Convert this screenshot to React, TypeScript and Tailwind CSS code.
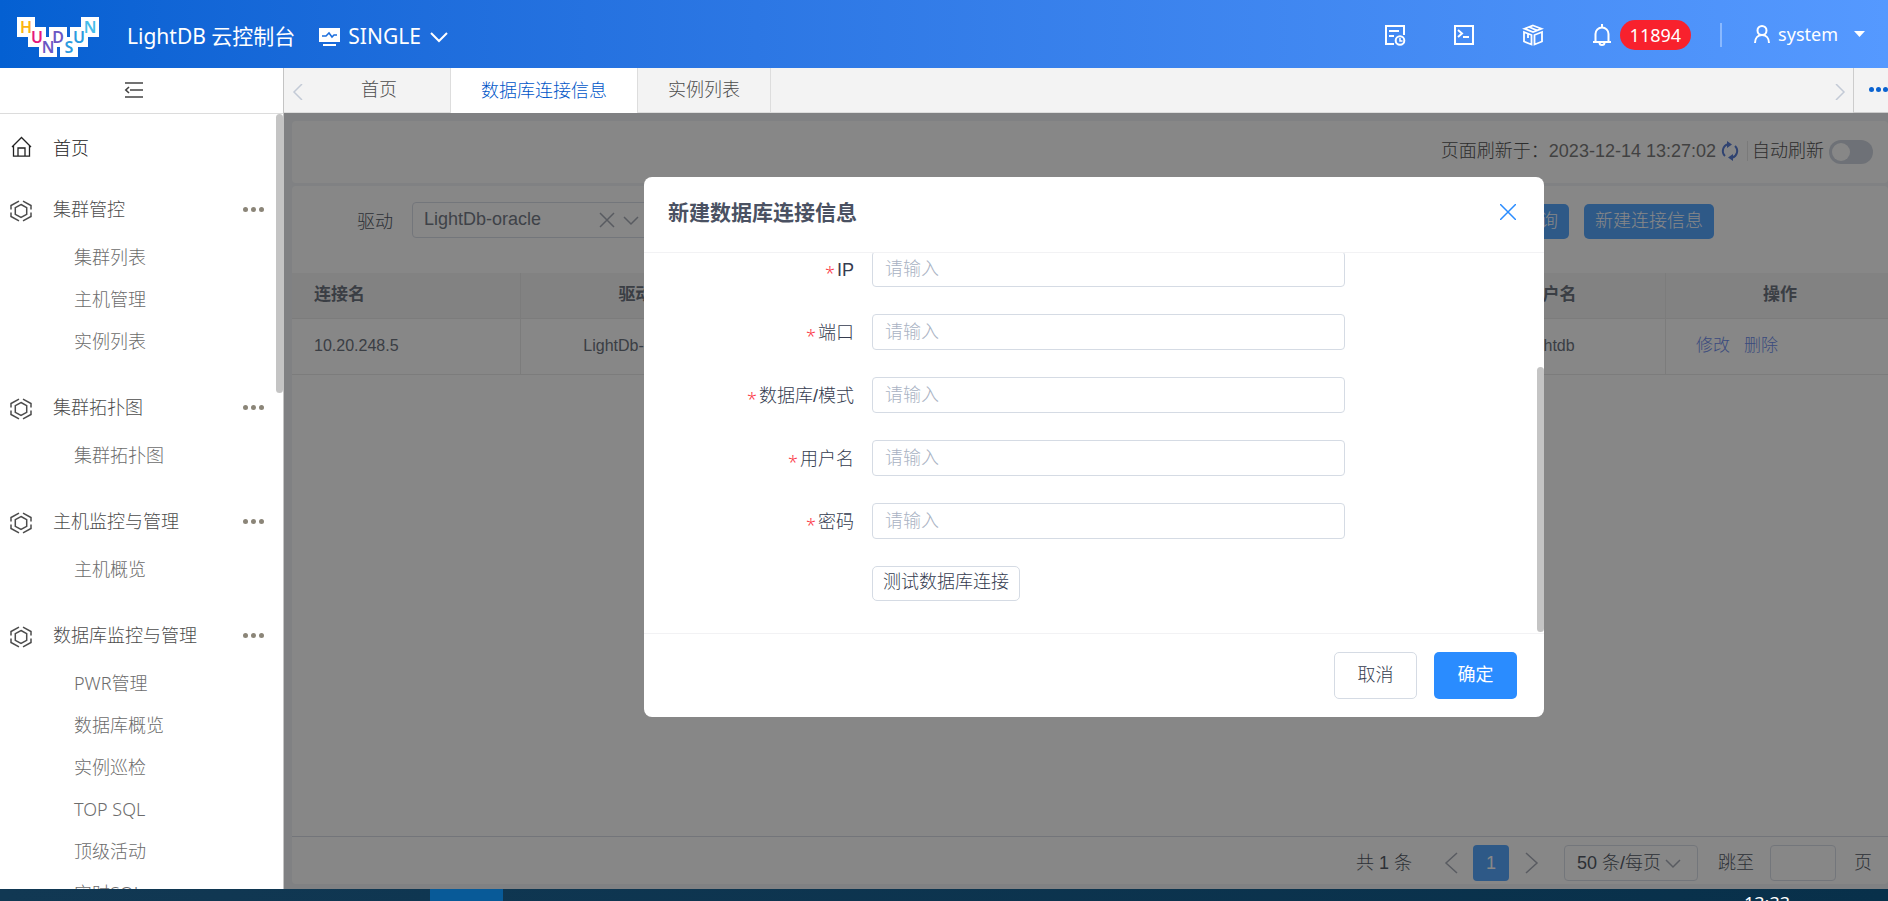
import { ReactNode } from "react"
import clsx from "clsx"

const menu = [
  { title: "集群管控", items: ["集群列表", "主机管理", "实例列表"] },
  { title: "集群拓扑图", items: ["集群拓扑图"] },
  { title: "主机监控与管理", items: ["主机概览"] },
  {
    title: "数据库监控与管理",
    items: ["PWR管理", "数据库概览", "实例巡检", "TOP SQL", "顶级活动", "实时SQL"],
  },
]

const tabs = [
  { title: "首页", className: "pr-[53px] pl-[54px]" },
  { title: "数据库连接信息", className: "px-[30px]", active: true },
  { title: "实例列表", className: "px-[30px]" },
]

const columns = ["连接名", "驱动", "IP", "端口", "数据库/模式", "用户名", "操作"]

const fields = [
  { id: "ip", label: "IP" },
  { id: "port", label: "端口" },
  { id: "schema", label: "数据库/模式" },
  { id: "user", label: "用户名" },
  { id: "password", label: "密码", type: "password" },
]

const logoTiles = [
  { x: 0, y: 0, letter: "H", color: "#fbb511" },
  { x: 11, y: 10, letter: "U", color: "#e6187c" },
  { x: 22, y: 20, letter: "N", color: "#6a57c4" },
  { x: 32, y: 10, letter: "D", color: "#6a57c4" },
  { x: 43, y: 20, letter: "S", color: "#2b9be0" },
  { x: 53, y: 10, letter: "U", color: "#2b9be0" },
  { x: 64, y: 0, letter: "N", color: "#45bdea" },
]

type IconProps = { className?: string; size?: number; stroke?: number; children: ReactNode }

function Icon({ className, size = 22, stroke = 2, children }: IconProps) {
  return (
    <svg
      className={clsx("shrink-0", className)}
      width={size}
      height={size}
      viewBox={`0 0 ${size} ${size}`}
      fill="none"
      stroke="currentColor"
      strokeWidth={stroke}
      aria-hidden="true"
    >
      {children}
    </svg>
  )
}

function Logo() {
  return (
    <svg width="82" height="40" viewBox="0 0 82 40" className="shrink-0" role="img" aria-label="HUNDSUN">
      {logoTiles.map((t) => (
        <rect key={t.x} x={t.x} y={t.y} width="18" height="20" fill="#fff" />
      ))}
      <path d="M30.500 10v9M51.500 10v9M41.500 31v9" stroke="#1064d5" strokeWidth="2" />
      {logoTiles.map((t) => (
        <text
          key={t.x}
          x={t.x + 9}
          y={t.y + 16}
          textAnchor="middle"
          fontSize="16"
          fontWeight="600"
          fontFamily="Noto Sans, sans-serif"
          fill={t.color}
        >
          {t.letter}
        </text>
      ))}
    </svg>
  )
}

function Header() {
  return (
    <header className="flex h-[68px] shrink-0 items-center bg-linear-to-r from-[#0460d2] to-[#5599ff] pr-[23px] pl-[17px] text-white">
      <div className="pt-[6px]">
        <Logo />
      </div>
      <h1 className="ml-7 pt-[6px] text-[21px] whitespace-nowrap">LightDB 云控制台</h1>
      <button className="ml-6 flex items-center pt-[6px] text-[21px]">
        <svg width="21" height="20" viewBox="0 0 21 20" aria-hidden="true">
          <path d="M0 1h21v14H0z M4 17h13v2H4z" fill="#fff" />
          <path d="M3 9h4l3-3 3 4 2-2h3" fill="none" stroke="#1a6ddd" strokeWidth="1.5" />
        </svg>
        <span className="ml-2">SINGLE</span>
        <Icon className="ml-[9px]" size={18}>
          <path d="M1 5l8 8 8-8" />
        </Icon>
      </button>

      <div className="ml-auto flex items-center pt-[2px]">
        <button aria-label="任务" className="mr-[47px]">
          <Icon>
            <path d="M10 20H2V2h18v9M5 7h10M5 12h5" />
            <circle cx="16" cy="16.500" r="4.300" />
            <path d="M16 14v3h2.500" strokeWidth="1.500" />
          </Icon>
        </button>
        <button aria-label="终端" className="mr-[47px]">
          <Icon>
            <path d="M2 2h18v18H2zM5 6l4 3.500L5 13M10 13h6" />
          </Icon>
        </button>
        <button aria-label="组件" className="mr-[47px]">
          <Icon stroke={1.8}>
            <path d="M11 1.500l8.500 3.200L11 8 2.500 4.700z" />
            <path d="M2 8l7.500 3v9.500L2 17.500zM20 8l-7.500 3v9.500l7.500-3zM6 10v4M7 3l8 3.300" />
          </Icon>
        </button>
        <button className="flex items-center" aria-label="消息">
          <Icon>
            <path d="M11 0v3M2 18h18M4.500 18v-8a6.500 6.500 0 0 1 13 0v8M8.500 18.500a2.500 2.500 0 0 0 5 0" />
          </Icon>
          <span className="ml-[7px] flex h-[30px] items-center rounded-full bg-[#f8212d] px-[10px] text-lg">11894</span>
        </button>
        <span className="ml-[29px] h-6 w-[2px] bg-[#8ab9ff]" />
        <button className="ml-[31px] flex items-center pb-[3px] text-lg">
          <Icon size={18}>
            <circle cx="9" cy="5.500" r="4.500" />
            <path d="M2 18c0-5 3-8 7-8s7 3 7 8" />
          </Icon>
          <span className="ml-[7px]">system</span>
          <svg className="ml-4" width="11" height="6" aria-hidden="true">
            <path d="M0 0h11L5.500 6z" fill="#fff" />
          </svg>
        </button>
      </div>
    </header>
  )
}

function Sidebar() {
  return (
    <aside className="relative flex w-[284px] shrink-0 flex-col overflow-hidden border-r border-[#c4c4c4] bg-white text-lg font-light">
      <div className="flex h-[46px] shrink-0 items-center justify-center border-b border-[#dcdcdc] pr-4 pb-[2px] text-[#444]">
        <button aria-label="收起菜单">
          <Icon size={20} stroke={1.6}>
            <path d="M1 3h18M6 10h13M1 17h18" />
            <path d="M5 7l-3.200 3L5 13" />
          </Icon>
        </button>
      </div>
      <span className="absolute top-[46px] right-0 h-[279px] w-[7px] rounded-full bg-[#c4c4c4]" />

      <nav>
        <a href="#home" className="flex h-[68px] items-center pl-[11px] text-[#222]">
          <Icon size={21} stroke={1.3} className="mb-1">
            <path d="M1 11L10.500 1.500 20 11M2.500 10v10.200h16V10M7 20v-8h7v8" />
          </Icon>
          <span className="ml-[21px]">首页</span>
        </a>
        {menu.map((group) => (
          <section key={group.title} className="mb-[18px] text-[#6c6c6c]">
            <h2 className="flex h-[54px] items-center pr-[19px] pl-[10px] text-[#4c4c4c]">
              <Icon size={22} stroke={1.5} className="mt-1">
                <path d="M11 4.500l5.700 3.200v6.600L11 17.500l-5.700-3.200V7.700z" />
                <path d="M9 1.200L1 5.500v4M13 1.200l8 4.300v4M1 12.500v4l8 4.300M21 12.500v4l-8 4.300" />
              </Icon>
              <span className="ml-[21px]">{group.title}</span>
              <button aria-label="更多" className="ml-auto flex gap-[3px]">
                <i className="size-[5px] rounded-full bg-[#8b8578]" />
                <i className="size-[5px] rounded-full bg-[#8b8578]" />
                <i className="size-[5px] rounded-full bg-[#8b8578]" />
              </button>
            </h2>
            {group.items.map((item) => (
              <a key={item} href={`#${item}`} className="flex h-[42px] items-center pl-[74px]">
                {item}
              </a>
            ))}
          </section>
        ))}
      </nav>
    </aside>
  )
}

function TabBar() {
  return (
    <div className="flex h-[45px] shrink-0 bg-[#f3f3f3] text-lg font-light text-[#4c4c4c]">
      <button aria-label="上一页" className="flex w-[23px] items-center justify-center border-b border-[#ddd] pl-1 pt-1 text-[#c3cad6]">
        <Icon size={16} stroke={1.5}>
          <path d="M12 0L4 8l8 8" />
        </Icon>
      </button>
      {tabs.map((tab) => (
        <button
          key={tab.title}
          className={clsx(
            "border-r border-r-[#ddd] pb-[2px]",
            tab.className,
            tab.active ? "bg-white text-[#0056c8]" : "border-b border-b-[#ddd]",
          )}
        >
          {tab.title}
        </button>
      ))}
      <div className="flex flex-1 items-center justify-end border-b border-[#ddd] pt-1 pr-[5px] text-[#c3cad6]">
        <Icon size={16} stroke={1.5}>
          <path d="M4 0l8 8-8 8" />
        </Icon>
      </div>
      <button aria-label="标签操作" className="flex w-[35px] items-center gap-[2px] overflow-hidden border-b border-l border-[#ccc] pb-[2px] pl-[15px]">
        <i className="size-[5px] shrink-0 rounded-full bg-[#0a63d1]" />
        <i className="size-[5px] shrink-0 rounded-full bg-[#0a63d1]" />
        <i className="size-[5px] shrink-0 rounded-full bg-[#0a63d1]" />
      </button>
    </div>
  )
}

function Toolbar() {
  return (
    <div className="flex h-[62px] shrink-0 items-center justify-end rounded-sm bg-white pr-[15px] pb-[2px] text-lg font-light text-[#555]">
      <span>页面刷新于：</span>
      <span className="font-normal text-[#7c7c7c]">2023-12-14 13:27:02</span>
      <button aria-label="刷新" className="ml-1 text-[#5b7fd6]">
        <Icon size={20}>
          <path d="M8 3.200A7 7 0 0 0 5 15M12 16.800A7 7 0 0 0 15 5" />
          <path d="M7 0l5 3.500L7 7zM13 13l-5 3.500 5 3.500z" fill="currentColor" stroke="none" />
        </Icon>
      </button>
      <span className="ml-[7px] h-5 w-px bg-[#e6e6e6]" />
      <label htmlFor="auto" className="ml-1">
        自动刷新
      </label>
      <input
        id="auto"
        type="checkbox"
        role="switch"
        className="mt-[2px] ml-[5px] h-6 w-11 appearance-none rounded-full bg-[#d0d6e0] before:mt-[3px] before:ml-[3px] before:block before:size-[18px] before:rounded-full before:bg-white"
      />
    </div>
  )
}

function Filters() {
  return (
    <div className="flex h-[87px] shrink-0 items-start pt-4 pl-[65px] text-lg">
      <label htmlFor="driver" className="mt-[6px] font-light text-[#555b66]">
        驱动
      </label>
      <div className="relative ml-[19px] w-[236px]">
        <select
          id="driver"
          className="h-9 w-full appearance-none rounded-sm border border-[#dadfe8] bg-white pb-[2px] pl-[11px] text-[#777d89]"
        >
          <option>LightDb-oracle</option>
        </select>
        <span className="pointer-events-none absolute top-[10px] right-[9px] flex gap-2 text-[#a8adb8]">
          <Icon size={16} stroke={1.5}>
            <path d="M1 1l14 14M15 1L1 15" />
          </Icon>
          <Icon size={16} stroke={1.5}>
            <path d="M1 5l7 7 7-7" />
          </Icon>
        </span>
      </div>
      <div className="mt-[2px] mr-[174px] ml-auto flex gap-[15px] font-light text-white">
        <button className="h-[35px] rounded-[5px] bg-[#58a8ff] px-[11px] pb-[2px]">查询</button>
        <button className="h-[35px] rounded-[5px] bg-[#58a8ff] px-[11px] pb-[2px]">新建连接信息</button>
      </div>
    </div>
  )
}

function ConnectionTable() {
  return (
    <table className="w-[calc(100%+7px)] table-fixed text-center text-[#6f7581]">
      <thead className="bg-[#f6f6f6] text-[17px]">
        <tr className="h-[45px] border-b border-[#ebebeb]">
          {columns.map((col) => (
            <th key={col} className="border-r border-[#ebebeb] pb-[2px] font-bold first:pl-[22px] first:text-left">
              {col}
            </th>
          ))}
        </tr>
      </thead>
      <tbody>
        <tr className="h-[56px] border-b border-[#ebebeb] *:border-r *:border-[#ebebeb]">
          <td className="pl-[22px] text-left">10.20.248.5</td>
          <td>LightDb-oracle</td>
          <td>10.20.248.5</td>
          <td>5432</td>
          <td>postgres</td>
          <td>lightdb</td>
          <td className="pl-[30px] text-left text-[17px] font-light text-[#6f8eee]">
            <a href="#edit">修改</a>
            <a href="#delete" className="ml-[14px]">
              删除
            </a>
          </td>
        </tr>
      </tbody>
    </table>
  )
}

function Pagination() {
  return (
    <div className="mt-auto flex h-[48px] shrink-0 items-center justify-end border-t border-[#dadde6] pt-[5px] pr-4 text-lg font-light text-[#555b66]">
      <span>共 1 条</span>
      <button aria-label="上一页" className="ml-[28px] text-[#a8adb8]">
        <Icon size={22} stroke={1.5}>
          <path d="M17 1L6 11l11 10" />
        </Icon>
      </button>
      <button className="ml-[11px] h-9 w-9 rounded-sm bg-[#58a8ff] font-normal text-white">1</button>
      <button aria-label="下一页" className="ml-[12px] text-[#a8adb8]">
        <Icon size={22} stroke={1.5}>
          <path d="M5 1l11 10L5 21" />
        </Icon>
      </button>
      <div className="relative ml-[21px] w-[134px]">
        <select
          aria-label="每页条数"
          className="h-9 w-full appearance-none rounded-sm border border-[#dadfe8] pl-3"
        >
          <option>50 条/每页</option>
        </select>
        <Icon size={16} stroke={1.5} className="pointer-events-none absolute top-[10px] right-[17px] text-[#a8adb8]">
          <path d="M1 5l7 7 7-7" />
        </Icon>
      </div>
      <label htmlFor="jump" className="ml-5">
        跳至
      </label>
      <input id="jump" className="ml-4 h-9 w-[66px] rounded-sm border border-[#dadfe8]" />
      <span className="ml-[18px]">页</span>
    </div>
  )
}

function ConnectionDialog() {
  return (
    <div
      role="dialog"
      aria-labelledby="dialog-title"
      className="flex h-[540px] w-[900px] flex-col overflow-hidden rounded-lg bg-white text-lg text-[#4a5162]"
    >
      <div className="flex h-[76px] shrink-0 items-center justify-between border-b border-[#f2f2f4] px-6 pb-[3px]">
        <h2 id="dialog-title" className="text-[21px] font-bold">
          新建数据库连接信息
        </h2>
        <button aria-label="关闭" className="mr-1 pb-[3px] text-[#2a8cff]">
          <Icon size={16} stroke={1.5}>
            <path d="M0 0l16 16M16 0L0 16" />
          </Icon>
        </button>
      </div>

      <form className="relative flex flex-1 flex-col justify-end gap-[27px] overflow-hidden pb-8 font-light text-[#353c4f]">
        {fields.map((field) => (
          <div key={field.id} className="flex h-9 shrink-0 items-center">
            <label htmlFor={field.id} className="w-[210px] pt-[2px] text-right">
              <span className="mr-[2px] inline-block align-[-4px] font-['Noto_Sans'] leading-5 text-[#fb3a48]">*</span>
              {field.label}
            </label>
            <input
              id={field.id}
              type={field.type ?? "text"}
              placeholder="请输入"
              className="ml-[18px] h-9 w-[473px] rounded-sm border border-[#d5dbe4] px-3 placeholder:text-[#a9b2c3]"
            />
          </div>
        ))}
        <button
          type="button"
          className="ml-[228px] h-[35px] shrink-0 self-start rounded-[5px] border border-[#d5dbe4] px-[10px] pb-[3px]"
        >
          测试数据库连接
        </button>
        <span className="absolute right-0 bottom-[1px] h-[265px] w-[7px] rounded-full bg-[#c4c4c4]" />
      </form>

      <div className="flex h-[84px] shrink-0 items-start justify-end gap-[17px] border-t border-[#f2f2f4] pt-[18px] pr-[27px]">
        <button className="h-[47px] w-[83px] rounded-[5px] border border-[#d5dbe4] pb-[2px] font-light text-[#353c4f]">
          取消
        </button>
        <button className="h-[47px] w-[83px] rounded-[5px] bg-[#2a8cff] pb-[2px] text-white">确定</button>
      </div>
    </div>
  )
}

export default function App() {
  return (
    <div className="flex h-screen flex-col overflow-hidden font-['Noto_Sans','Noto_Sans_CJK_SC',sans-serif]">
      <Header />
      <div className="flex min-h-0 flex-1">
        <Sidebar />
        <div className="flex min-w-0 flex-1 flex-col">
          <TabBar />
          <main className="relative flex min-h-0 flex-1 flex-col gap-[3px] bg-[#f1f4f8] pt-2 pb-[5px] pl-2 font-['Liberation_Sans','Noto_Sans_CJK_SC',sans-serif]">
            <Toolbar />
            <div className="flex min-h-0 flex-1 flex-col overflow-hidden rounded-sm bg-white">
              <Filters />
              <ConnectionTable />
              <Pagination />
            </div>
            <div className="absolute inset-0 flex items-start justify-center bg-black/[0.47] pt-16 pl-4">
              <ConnectionDialog />
            </div>
          </main>
        </div>
      </div>
      {/* desktop taskbar peeking out below the page */}
      <footer className="flex h-3 shrink-0 overflow-hidden bg-linear-to-r from-[#113853] to-[#08304a] pr-[98px] pl-[430px] text-lg text-white">
        <span className="w-[73px] bg-[#085a98]" />
        <time className="mt-[3px] ml-auto leading-[22px]">13:33</time>
      </footer>
    </div>
  )
}
